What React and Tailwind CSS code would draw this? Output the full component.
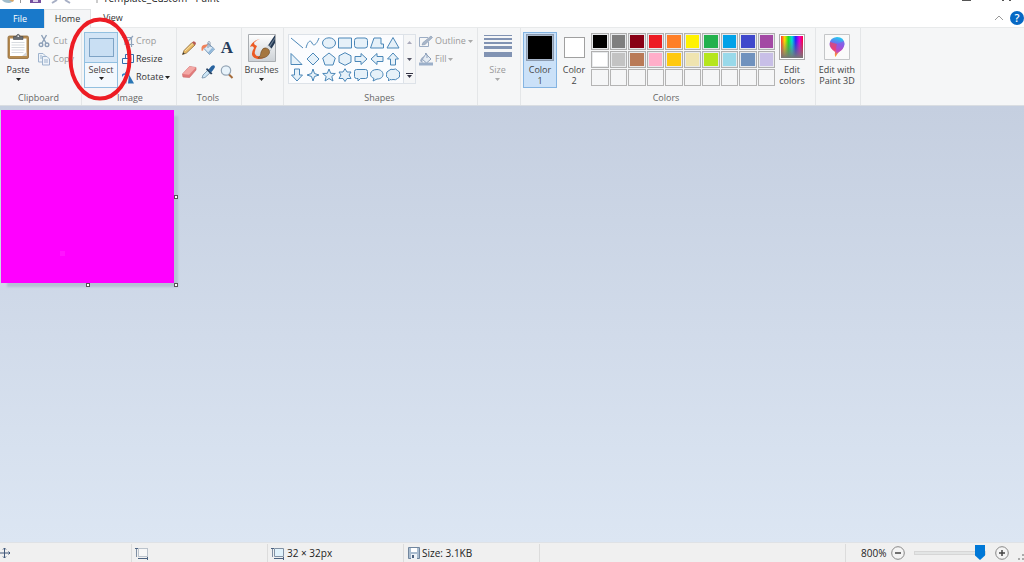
import { useState } from 'react'

const paletteColors = [
  { name: 'Black', cls: 'bg-black' },
  { name: 'Gray 50%', cls: 'bg-[#7f7f7f]' },
  { name: 'Dark red', cls: 'bg-[#880015]' },
  { name: 'Red', cls: 'bg-[#ed1c24]' },
  { name: 'Orange', cls: 'bg-[#ff7f27]' },
  { name: 'Yellow', cls: 'bg-[#fff200]' },
  { name: 'Green', cls: 'bg-[#22b14c]' },
  { name: 'Turquoise', cls: 'bg-[#00a2e8]' },
  { name: 'Indigo', cls: 'bg-[#3f48cc]' },
  { name: 'Purple', cls: 'bg-[#a349a4]' },
  { name: 'White', cls: 'bg-white' },
  { name: 'Gray 25%', cls: 'bg-[#c3c3c3]' },
  { name: 'Brown', cls: 'bg-[#b97a57]' },
  { name: 'Rose', cls: 'bg-[#ffaec9]' },
  { name: 'Gold', cls: 'bg-[#ffc90e]' },
  { name: 'Light yellow', cls: 'bg-[#efe4b0]' },
  { name: 'Lime', cls: 'bg-[#b5e61d]' },
  { name: 'Light turquoise', cls: 'bg-[#99d9ea]' },
  { name: 'Blue-gray', cls: 'bg-[#7092be]' },
  { name: 'Lavender', cls: 'bg-[#c8bfe7]' },
]

const emptySlots = [1, 2, 3, 4, 5, 6, 7, 8, 9, 10]

const shapes = [
  { name: 'Line', d: 'M2 3L14 13' },
  { name: 'Curve', d: 'M1 13C3 5 6 5 7 8S11 11 14 3' },
  { name: 'Oval', d: 'M1.5 8a6.5 5.2 0 1 0 13 0a6.5 5.2 0 1 0 -13 0z' },
  { name: 'Rectangle', d: 'M1.5 3h13v10h-13z' },
  { name: 'Rounded rectangle', d: 'M4 3h8q2.5 0 2.5 2.5v5q0 2.500-2.500 2.500h-8q-2.500 0-2.500-2.500v-5q0-2.500 2.500-2.500z' },
  { name: 'Polygon', d: 'M5 3h7V9h2.500v4h-13z' },
  { name: 'Triangle', d: 'M8 2.500L14 13H2z' },
  { name: 'Right triangle', d: 'M2 2.500V13.500H13z' },
  { name: 'Diamond', d: 'M8 2L14 8L8 14L2 8z' },
  { name: 'Pentagon', d: 'M8 2L14.300 7L12 14H4L1.700 7z' },
  { name: 'Hexagon', d: 'M8 1.700L14 4.800V11.200L8 14.300L2 11.200V4.800z' },
  { name: 'Right arrow', d: 'M2 5.500H8V2.500L14 8L8 13.500V10.500H2z' },
  { name: 'Left arrow', d: 'M14 5.500H8V2.500L2 8L8 13.500V10.500H14z' },
  { name: 'Up arrow', d: 'M5.500 14V8H2.500L8 2L13.500 8H10.500V14z' },
  { name: 'Down arrow', d: 'M5.500 2V8H2.500L8 14L13.500 8H10.500V2z' },
  { name: 'Four-point star', d: 'M8 2L9.500 6.500L14 8L9.500 9.500L8 14L6.500 9.500L2 8L6.500 6.500z' },
  { name: 'Five-point star', d: 'M8 2L9.700 6.300L14.300 6.500L10.800 9.500L12 14L8 11.500L4 14L5.200 9.500L1.700 6.500L6.300 6.300z' },
  { name: 'Six-point star', d: 'M8 1.700L10 5H14L12 8L14 11.500H10L8 14.500L6 11.500H2L4 8L2 5H6z' },
  { name: 'Rounded callout', d: 'M3.500 2.500h9q2 0 2 2v5q0 2-2 2H7.500L5 14V11.500H3.500q-2 0-2-2V4.500q0-2 2-2z' },
  { name: 'Oval callout', d: 'M4 14L5 11.500C-.5 9.500 .5 2.500 8 2.500S16.500 12 8 12z' },
  { name: 'Cloud callout', d: 'M4 3.500Q6 1.500 8 2.500Q11 1 12.500 3.500Q15.500 4.500 14.500 7.500Q15.500 10.500 12.500 11.500Q10.500 13.500 8 12.500Q6.500 13 5 12.500L3.500 14L3.700 11.500Q.5 10 1.500 7.500Q1 4.500 4 3.500z' },
]

function Caret({ className = 'text-[#222]' }) {
  return (
    <svg viewBox="0 0 5 3" className={`w-[5px] h-[3px] shrink-0 ${className}`} aria-hidden="true">
      <path d="M0 0h5L2.500 3z" fill="currentColor" />
    </svg>
  )
}

function Group({ label, className, children }) {
  return (
    <section className={`flex flex-col shrink-0 pt-1 border-r border-[#e4e6e8] ${className}`} aria-label={label}>
      <div className="flex flex-1 items-start">{children}</div>
      <div className="h-[14px] leading-[14px] text-center text-[#666]">{label}</div>
    </section>
  )
}

function SmallButton({ icon, label, disabled, caret }) {
  return (
    <button type="button" disabled={disabled} className={`flex items-center gap-[2px] h-[18px] whitespace-nowrap ${disabled ? 'text-[#999]' : 'text-[#333]'}`}>
      {icon}
      {label}
      {caret && <Caret className={disabled ? 'text-[#aaa]' : 'text-[#222]'} />}
    </button>
  )
}

function PasteIcon() {
  return (
    <svg viewBox="0 0 24 27" className="w-6 h-[27px]" aria-hidden="true">
      <rect x="2" y="3" width="20.500" height="22.500" rx="1.500" fill="#b58a50" stroke="#8f6a3a" strokeWidth=".8" />
      <path d="M4 5.500h16.500v17.500H4z" fill="#fff" />
      <path d="M16 23L20.500 19V23z" fill="#d3d6da" />
      <path d="M5.500 9.500h13M5.500 12h13M5.500 14.500h13M5.500 17h13M5.500 19.500h12" stroke="#cdd2d8" strokeWidth=".8" />
      <path d="M7.500 3.500h2.500q2-4.500 4.500 0H17v3H7.500z" fill="#6a6e73" stroke="#484c50" strokeWidth=".6" />
      <path d="M11.500 2.500h1.500v1.500h-1.500z" fill="#e8e8e8" />
    </svg>
  )
}

function CutIcon() {
  return (
    <svg viewBox="0 0 12 14" className="w-3 h-[14px] mr-px" fill="none" stroke="#8ea0b8" strokeWidth="1.400" aria-hidden="true">
      <path d="M3.500 1L8 9M8.500 1L4 9" />
      <circle cx="3" cy="10.800" r="1.800" />
      <circle cx="9" cy="10.800" r="1.800" />
    </svg>
  )
}

function CopyIcon() {
  return (
    <svg viewBox="0 0 12 14" className="w-3 h-[14px] mr-px" fill="#eef3f9" stroke="#9eb3cd" aria-hidden="true">
      <path d="M.5 1.500H5L7 3.500V10H.5z" />
      <path d="M4.500 4.500H9L11.500 7V13H4.500z" />
      <path d="M2 4h2M2 6h2M6 8h4M6 10h4" />
    </svg>
  )
}

function CropIcon() {
  return (
    <svg viewBox="0 0 12 12" className="w-3 h-3" fill="none" stroke="#8fa3bb" strokeWidth="1.200" aria-hidden="true">
      <path d="M3 0V9.500H12M0 2.500H9.500V12M3 9.500L11 1" />
    </svg>
  )
}

function ResizeIcon() {
  return (
    <svg viewBox="0 0 12 12" className="w-3 h-3" fill="#f5fafe" stroke="#326fae" aria-hidden="true">
      <path d="M3.500 1.500h8v8h-8z" />
      <path d="M.5 5.500h6v5h-6z" />
    </svg>
  )
}

function RotateIcon() {
  return (
    <svg viewBox="0 0 12 13" className="w-3 h-[13px]" aria-hidden="true">
      <path d="M0 5.500Q.5 2.500 4 3" fill="none" stroke="#2d83c9" strokeWidth="1.500" />
      <path d="M3 .5L6 3L3.500 5.500z" fill="#2d83c9" />
      <path d="M7 3.500L12 12.500H6z" fill="#2976b5" />
      <path d="M0 12.500L5 8V12.500z" fill="#a9cbe6" />
    </svg>
  )
}

function PencilIcon() {
  return (
    <svg viewBox="0 0 16 16" className="w-4 h-4" aria-hidden="true">
      <path d="M1.500 14.500L3 10.500L11 2.500L14 5L5.500 13z" fill="#e8b863" stroke="#8b6b3d" strokeWidth=".8" />
      <path d="M4 11L12 3.500" stroke="#fae3a8" />
      <path d="M11 2.500L12.500 1.200Q15 1.500 15 4L14 5z" fill="#b75a55" />
      <path d="M1.500 14.500L2.300 12.300L3.800 13.700z" fill="#333" />
    </svg>
  )
}

function BucketIcon() {
  return (
    <svg viewBox="0 0 16 16" className="w-4 h-4" aria-hidden="true">
      <path d="M8 3.500L14.500 9L9.500 14.500L4 8.500z" fill="#d9e8f5" stroke="#5e87ad" strokeWidth=".8" />
      <path d="M8 8V2.500Q9 0 10 2.500V7" fill="none" stroke="#6c8199" strokeWidth=".8" />
      <path d="M9.500 14L14 9L12 8L8 12.500z" fill="#8fb7da" />
      <path d="M8 4.500Q2 4 1.500 7.500V10.500Q3.500 11.500 3.500 8.500Q6 8 8 4.500z" fill="#f0825a" />
    </svg>
  )
}

function EraserIcon() {
  return (
    <svg viewBox="0 0 16 16" className="w-4 h-4" aria-hidden="true">
      <path d="M1.500 10L8.500 2.500L15 3.500V6L8.500 13.500L2 13z" fill="#e27a7a" stroke="#cf7070" strokeWidth=".7" />
      <path d="M1.500 10L8 10.800L15 3.500L8.500 2.500z" fill="#f3a8a5" />
    </svg>
  )
}

function PickerIcon() {
  return (
    <svg viewBox="0 0 16 16" className="w-4 h-4" aria-hidden="true">
      <path d="M2 14L3 11L8.500 5.500L11 8L5 13.500z" fill="#cce5f5" stroke="#6f8ca6" strokeWidth=".8" />
      <path d="M7 4L12.500 9.500L11 10.500L6 5.500z" fill="#263f5e" />
      <path d="M8.500 5.500L11.500 2Q14 .5 15 2.500Q15 4 11 8.500z" fill="#28639f" />
    </svg>
  )
}

function MagnifierIcon() {
  return (
    <svg viewBox="0 0 16 16" className="w-4 h-4" aria-hidden="true">
      <path d="M9.500 10L13.500 14" stroke="#a66c3b" strokeWidth="2" />
      <circle cx="7" cy="6.500" r="4.700" fill="#e8f3fb" stroke="#93a4b5" strokeWidth="1.200" />
    </svg>
  )
}

function BrushesIcon() {
  return (
    <svg viewBox="0 0 28 28" className="w-7 h-7" aria-hidden="true">
      <defs>
        <linearGradient id="brush-bg" x1="0" y1="0" x2="0" y2="1">
          <stop offset="0" stopColor="#fff" />
          <stop offset="1" stopColor="#ccd1d6" />
        </linearGradient>
      </defs>
      <path d="M.5 .5h27v27H.5z" fill="url(#brush-bg)" stroke="#a9adb1" />
      <path d="M12 5Q4 7 2 13Q5 11 6 14Q1 22 8 24.500Q13 26 17 23L14 21Q9 24 7 20Q6 17 9 12Q6 11 6 9Q8 6 12 5z" fill="#ec5a24" />
      <path d="M19 13L27 1V9L22 17z" fill="#243953" />
      <path d="M21 12L27 3.500V5L22 13z" fill="#6d8096" />
      <path d="M17 14L20 11L24 15L21 18z" fill="#d9dde0" />
      <path d="M10 24Q13 22 13 18Q15 13 18 14Q22 15 21.500 19Q19 25 10 24z" fill="#a5763f" stroke="#6b4a26" strokeWidth=".6" />
    </svg>
  )
}

function OutlineIcon() {
  return (
    <svg viewBox="0 0 14 13" className="w-[14px] h-[13px]" aria-hidden="true">
      <path d="M9 2.500H.5v9h9V7" fill="none" stroke="#9cadc4" />
      <path d="M3 10L4 7.500L12 1L13.500 2.500L6 9.500z" fill="#a8b6c9" stroke="#8798b2" strokeWidth=".6" />
    </svg>
  )
}

function FillIcon() {
  return (
    <svg viewBox="0 0 14 14" className="w-[14px] h-[14px]" aria-hidden="true">
      <path d="M7 2L12 7L7.500 11L3 7z" fill="#e4ebf3" stroke="#8ea1bb" />
      <path d="M6 2Q7-.5 8 3V6" fill="none" stroke="#8ea1bb" />
      <path d="M1 9Q2 5 6 4L3.500 8V11z" fill="#9bacc4" />
      <path d="M0 10.500h14v3H0z" fill="#9bafc9" />
    </svg>
  )
}

function EditColorsIcon() {
  return (
    <span className="w-[26px] h-[26px] border border-[#aaa] bg-white p-px">
      <span className="block w-full h-full bg-[linear-gradient(to_right,#f33,#fd0,#2d2,#0dd,#22f,#d0d,#f03)]">
        <span className="block w-full h-full bg-[linear-gradient(to_bottom,transparent_20%,#777)]" />
      </span>
    </span>
  )
}

function Paint3DIcon() {
  return (
    <svg viewBox="0 0 26 26" className="w-[26px] h-[26px]" aria-hidden="true">
      <defs>
        <linearGradient id="drop" x1=".6" y1="0" x2=".4" y2="1">
          <stop offset="0" stopColor="#20cdf0" />
          <stop offset=".35" stopColor="#6a6ff0" />
          <stop offset=".65" stopColor="#e0409a" />
          <stop offset="1" stopColor="#ffb319" />
        </linearGradient>
      </defs>
      <path d="M.5 .5h25v25H.5z" fill="#fafafa" stroke="#c4c6c8" />
      <path d="M13 3Q20 3 20.500 10Q20 15 15 18Q13 20 11.500 23Q10.500 22 11 18Q5.500 14 5.500 10Q6 3.500 13 3z" fill="url(#drop)" />
      <path d="M13 10L20 7Q22 13 15 18L12 19z" fill="#a04fe0" opacity=".6" />
      <path d="M6 8L13 10L11 17Q5 13 6 8z" fill="#ef4265" opacity=".7" />
    </svg>
  )
}

function SizeIcon() {
  return (
    <svg viewBox="0 0 28 23" className="w-7 h-[23px]" fill="#8193b3" aria-hidden="true">
      <path d="M0 0h28v1H0zM0 3h28v2H0zM0 7h28v2H0zM0 11h28v3H0zM0 17h28v5H0z" />
    </svg>
  )
}

function SheetIcon({ filled }) {
  return (
    <svg viewBox="0 0 14 13" className="w-[14px] h-[13px] shrink-0" aria-hidden="true">
      <path d="M3.500 1.500h9v8h-9z" fill={filled ? '#e1f2fb' : '#f7f7f7'} stroke="#8292a5" strokeDasharray={filled ? undefined : '1 1'} />
      <path d="M1.500 1V10" stroke="#7f8fa3" />
      <path d="M3 11.500H13" stroke="#4c6280" />
      <path d="M0 1h3v1H0zM12 10h1v3h-1z" fill="#4c6280" />
    </svg>
  )
}

function DiskIcon() {
  return (
    <svg viewBox="0 0 12 12" className="w-3 h-3 shrink-0" aria-hidden="true">
      <path d="M.5 .5h11v11H.5z" fill="#a9bccf" stroke="#71869e" />
      <path d="M3 1h6v4H3z" fill="#fff" />
      <path d="M3 7h6v5H3z" fill="#eef2f6" />
      <path d="M4 8h2v3H4z" fill="#4c6280" />
    </svg>
  )
}

function TitleBar() {
  return (
    <header className="flex items-start h-[9px] overflow-hidden bg-white">
      <div className="flex items-start flex-1 min-w-0">
        <svg viewBox="0 0 98 6" className="w-[98px] h-[6px] shrink-0" aria-hidden="true">
          <path d="M2 0Q4 3 9 3Q12 3 13 0z" fill="#a1bccb" />
          <path d="M9 0L13 2L14 0z" fill="#d7a565" />
          <path d="M20.500 0V3M97 0V3" stroke="#999" />
          <path d="M30 0h11v3H30z" fill="#76509f" />
          <path d="M33 0h5v2h-5z" fill="#d9cce8" />
          <path d="M52 3L57 0M65 0L70 3" stroke="#a7afc5" strokeWidth="2" />
        </svg>
        <h1 className="-mt-2 ml-[5px] text-[10px] leading-3 text-[#222] whitespace-nowrap">Template_Custom - Paint</h1>
      </div>
      <svg viewBox="0 0 62 3" className="w-[62px] h-[3px] shrink-0" fill="#555" aria-hidden="true">
        <path d="M0 0h9v1H0zM40 0h2v1h-2zM47 0h2v1h-2z" />
      </svg>
    </header>
  )
}

function Tabs() {
  return (
    <nav className="flex items-stretch h-[19px] bg-white text-[#333]">
      <button type="button" className="w-11 bg-[#1979ca] text-white pr-1">File</button>
      <button type="button" className="w-[47px] bg-[#f5f6f7] border-x border-t border-[#e0e2e4]">Home</button>
      <button type="button" className="w-11 border-b border-[#e8eaeb]">View</button>
      <div className="flex flex-1 items-center justify-end gap-[6px] border-b border-[#e8eaeb]">
        <button type="button" aria-label="Minimize the ribbon">
          <svg viewBox="0 0 10 6" className="w-[10px] h-[6px]" aria-hidden="true">
            <path d="M1 5L5 1L9 5" fill="none" stroke="#999" />
          </svg>
        </button>
        <button type="button" aria-label="Help" className="w-[14px] h-[14px] rounded-full bg-[#0668c4] text-white text-[11px] leading-[14px] font-semibold">?</button>
      </div>
    </nav>
  )
}

function Ribbon() {
  return (
    <div className="flex h-[78px] bg-[#f5f6f7] border-b border-[#d9dde2] overflow-hidden text-[#444]">
      <Group label="Clipboard" className="w-[82px] pr-1">
        <button type="button" className="flex flex-col items-center w-9 pt-px text-[#333]">
          <PasteIcon />
          <span className="h-4 leading-4 mt-[2px]">Paste</span>
          <Caret />
        </button>
        <div className="flex flex-col pl-[2px]">
          <SmallButton icon={<CutIcon />} label="Cut" disabled />
          <SmallButton icon={<CopyIcon />} label="Copy" disabled />
        </div>
      </Group>

      <Group label="Image" className="w-[95px] pl-[2px]">
        <button type="button" className="flex flex-col shrink-0 items-center w-[34px] h-14 border border-[#92c0e0] bg-[#f3f8fd]">
          <span className="flex w-full h-[30px] items-center justify-center bg-[#d3e5f6] border-b border-[#92c0e0]">
            <svg viewBox="0 0 25 19" className="w-[25px] h-[19px]" aria-hidden="true">
              <path d="M.5 .5h24v18H.5z" fill="#c9dff3" stroke="#2f6597" strokeDasharray="1 1" />
            </svg>
          </span>
          <span className="h-[14px] leading-[14px]">Select</span>
          <Caret />
        </button>
        <div className="flex flex-col pl-1">
          <SmallButton icon={<CropIcon />} label="Crop" disabled />
          <SmallButton icon={<ResizeIcon />} label="Resize" />
          <SmallButton icon={<RotateIcon />} label="Rotate" caret />
        </div>
      </Group>

      <Group label="Tools" className="w-[65px] pr-[2px]">
        <div className="grid grid-cols-3 w-[57px] mx-auto mt-1">
          <button type="button" aria-label="Pencil" className="flex h-6 items-center justify-center"><PencilIcon /></button>
          <button type="button" aria-label="Fill with color" className="flex h-6 items-center justify-center"><BucketIcon /></button>
          <button type="button" aria-label="Text" className="h-6 font-['Liberation_Serif',serif] text-[17px] leading-6 font-bold text-[#263d5c]">A</button>
          <button type="button" aria-label="Eraser" className="flex h-6 items-center justify-center"><EraserIcon /></button>
          <button type="button" aria-label="Color picker" className="flex h-6 items-center justify-center"><PickerIcon /></button>
          <button type="button" aria-label="Magnifier" className="flex h-6 items-center justify-center"><MagnifierIcon /></button>
        </div>
      </Group>

      <Group className="w-[42px] pr-[2px]">
        <button type="button" className="flex flex-col items-center w-full pt-[2px]">
          <BrushesIcon />
          <span className="h-4 leading-4">Brushes</span>
          <Caret />
        </button>
      </Group>

      <Group label="Shapes" className="w-[194px] pl-1 pr-[6px]">
        <div className="flex mt-[2px] border border-[#dde2e8] bg-[#fbfcfe]">
          <div className="grid grid-cols-7 w-[114px] pr-[2px]">
            {shapes.map((s) => (
              <button key={s.name} type="button" aria-label={s.name} className="flex h-4 items-center justify-center">
                <svg viewBox="0 0 16 16" className="w-4 h-4" fill="#e6f1f9" stroke="#4b87b8" strokeWidth="1" aria-hidden="true">
                  <path d={s.d} fill={s.name === 'Line' || s.name === 'Curve' ? 'none' : undefined} />
                </svg>
              </button>
            ))}
          </div>
          <div className="flex flex-col w-3 border-l border-[#dde2e8] bg-[#f5f6f7]">
            <button type="button" aria-label="Scroll up" className="flex flex-1 items-center justify-center rotate-180"><Caret className="text-[#aab]" /></button>
            <button type="button" aria-label="Scroll down" className="flex flex-1 items-center justify-center"><Caret className="text-[#556]" /></button>
            <button type="button" aria-label="More shapes" className="flex flex-col flex-1 items-center justify-center gap-px">
              <span className="w-[7px] h-px bg-[#334]" />
              <Caret className="text-[#334]" />
            </button>
          </div>
        </div>
        <div className="flex flex-col pl-[3px]">
          <SmallButton icon={<OutlineIcon />} label="Outline" disabled caret />
          <SmallButton icon={<FillIcon />} label="Fill" disabled caret />
        </div>
      </Group>

      <Group className="w-[43px] pr-[3px]">
        <button type="button" disabled className="flex flex-col items-center w-full pt-[3px] text-[#999]">
          <SizeIcon />
          <span className="h-4 leading-4 mt-1">Size</span>
          <Caret className="text-[#aaa]" />
        </button>
      </Group>

      <Group label="Colors" className="w-[295px] pl-[2px] pr-[6px]">
        <button type="button" className="flex flex-col shrink-0 items-center w-[34px] h-14 pt-px border border-[#84b4e2] bg-[#cbe1f8]">
          <span className="w-7 h-[27px] p-px border border-[#8b9bb0] bg-[#a9b8cb]">
            <span className="block w-full h-full bg-black" />
          </span>
          <span className="pt-[3px] leading-[11px]">Color<br />1</span>
        </button>
        <button type="button" className="flex flex-col shrink-0 items-center w-[34px] pt-[5px]">
          <span className="w-[21px] h-[21px] border border-[#a0a0a0] bg-white" />
          <span className="pt-[6px] leading-[11px]">Color<br />2</span>
        </button>
        <div className="grid shrink-0 grid-cols-10 gap-px w-[184px] mt-px">
          {paletteColors.map((c) => (
            <button key={c.name} type="button" aria-label={c.name} className={`h-[17px] border border-[#b0b0b0] outline -outline-offset-2 outline-[#e8eaec] ${c.cls}`} />
          ))}
          {emptySlots.map((n) => (
            <button key={n} type="button" aria-label={`Custom color ${n}`} className="h-[17px] border border-[#b4b4b4]" />
          ))}
        </div>
        <button type="button" className="flex flex-col shrink-0 items-center w-[34px] pt-[2px]">
          <EditColorsIcon />
          <span className="pt-1 leading-[11px]">Edit<br />colors</span>
        </button>
      </Group>

      <Group className="w-[45px] pr-[2px]">
        <button type="button" className="flex flex-col items-center w-full pt-[2px] whitespace-nowrap">
          <Paint3DIcon />
          <span className="pt-1 leading-[11px]">Edit with<br />Paint 3D</span>
        </button>
      </Group>
    </div>
  )
}

function Handle({ className }) {
  return <span className={`absolute w-1 h-1 border border-[#555] bg-white ${className}`} />
}

function Workspace() {
  return (
    <main className="flex-1 pt-1 pl-px bg-linear-to-b from-[#c5cfe0] to-[#dce6f3]">
      <div className="relative w-[173px] h-[173px]">
        <div className="w-full h-full bg-[#ff00ff] shadow-[5px_5px_2px_-1px_#b4c0d4]" />
        <span className="absolute left-[59px] top-[141px] w-[5px] h-[5px] bg-[#ff14ff]" />
        <Handle className="left-[173px] top-[85px]" />
        <Handle className="left-[85px] top-[173px]" />
        <Handle className="left-[173px] top-[173px]" />
      </div>
    </main>
  )
}

function StatusBar() {
  const [zoom, setZoom] = useState(6)
  const percent = [12.5, 25, 50, 100, 200, 400, 800][zoom]

  return (
    <footer className="flex h-5 items-stretch pt-px bg-[#f0f0f0] border-t border-[#dfe2e6] text-[10px] text-[#222] overflow-hidden">
      <div className="flex items-center w-[132px] border-r border-[#dcdcdc]">
        <svg viewBox="0 0 11 12" className="w-[11px] h-3" fill="none" stroke="#42597a" aria-hidden="true">
          <path d="M4.500 1V11M0 6H10M3 2.500L4.500 1L6 2.500M3 9.500L4.500 11L6 9.500M8.500 4.500L10 6L8.500 7.500" />
        </svg>
      </div>
      <div className="flex items-center w-[136px] pl-[3px] border-r border-[#dcdcdc]"><SheetIcon /></div>
      <div className="flex items-center gap-[2px] w-[136px] pl-[3px] border-r border-[#dcdcdc]"><SheetIcon filled />32 × 32px</div>
      <div className="flex items-center gap-[2px] w-[136px] pl-[4px] border-r border-[#dcdcdc]"><DiskIcon />Size: 3.1KB</div>
      <div className="flex-1" />
      <div className="flex items-center pl-[15px] border-l border-[#dcdcdc]">
        <label htmlFor="zoom" className="w-[30px]">{percent}%</label>
        <button type="button" aria-label="Zoom out" onClick={() => setZoom(Math.max(0, zoom - 1))}>
          <svg viewBox="0 0 14 14" className="w-[14px] h-[14px]" fill="#f4f4f4" stroke="#888" aria-hidden="true">
            <circle cx="7" cy="7" r="6.300" />
            <path d="M4 7h6" stroke="#444" strokeWidth="1.500" />
          </svg>
        </button>
        <input
          id="zoom"
          type="range"
          min="0"
          max="6"
          value={zoom}
          onChange={(e) => setZoom(Number(e.target.value))}
          className="appearance-none w-[72px] h-[15px] mx-[9px] bg-transparent [&::-webkit-slider-runnable-track]:h-1 [&::-webkit-slider-runnable-track]:bg-[#e3e5e5] [&::-webkit-slider-runnable-track]:border [&::-webkit-slider-runnable-track]:border-[#d6d6d6] [&::-webkit-slider-thumb]:appearance-none [&::-webkit-slider-thumb]:w-[10px] [&::-webkit-slider-thumb]:h-[15px] [&::-webkit-slider-thumb]:-mt-[7px] [&::-webkit-slider-thumb]:bg-[#0078d7] [&::-webkit-slider-thumb]:[clip-path:polygon(0_0,100%_0,100%_70%,50%_100%,0_70%)]"
        />
        <button type="button" aria-label="Zoom in" onClick={() => setZoom(Math.min(6, zoom + 1))}>
          <svg viewBox="0 0 14 14" className="w-[14px] h-[14px]" fill="#f4f4f4" stroke="#888" aria-hidden="true">
            <circle cx="7" cy="7" r="6.300" />
            <path d="M4 7h6M7 4v6" stroke="#444" strokeWidth="1.500" />
          </svg>
        </button>
        <svg viewBox="0 0 15 16" className="w-[15px] h-4 self-end" fill="#aaa" aria-hidden="true">
          <path d="M13 8h2v2h-2zM13 12h2v2h-2zM9 12h2v2H9z" />
        </svg>
      </div>
    </footer>
  )
}

export default function App() {
  return (
    <div className="relative flex flex-col min-h-screen overflow-hidden font-['Open_Sans','Noto_Sans',sans-serif] text-[9px] leading-3">
      <TitleBar />
      <Tabs />
      <Ribbon />
      <Workspace />
      <StatusBar />
      {/* red marker drawn round the Select tool */}
      <svg viewBox="0 0 64 84" className="absolute left-[68px] top-[17px] w-16 h-[84px] pointer-events-none" aria-hidden="true">
        <ellipse cx="32" cy="42" rx="29.500" ry="39.500" fill="none" stroke="#ed1c24" strokeWidth="4" />
      </svg>
    </div>
  )
}
